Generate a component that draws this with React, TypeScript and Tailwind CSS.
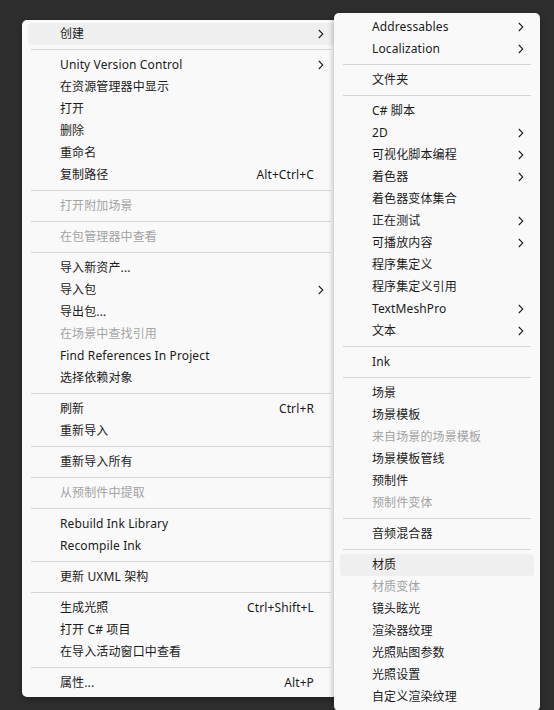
type Item =
  | "sep"
  | { t: string; k?: string; sub?: boolean; dis?: boolean; hl?: boolean };

const leftItems: Item[] = [
  { t: "创建", sub: true, hl: true },
  "sep",
  { t: "Unity Version Control", sub: true },
  { t: "在资源管理器中显示" },
  { t: "打开" },
  { t: "删除" },
  { t: "重命名" },
  { t: "复制路径", k: "Alt+Ctrl+C" },
  "sep",
  { t: "打开附加场景", dis: true },
  "sep",
  { t: "在包管理器中查看", dis: true },
  "sep",
  { t: "导入新资产..." },
  { t: "导入包", sub: true },
  { t: "导出包..." },
  { t: "在场景中查找引用", dis: true },
  { t: "Find References In Project" },
  { t: "选择依赖对象" },
  "sep",
  { t: "刷新", k: "Ctrl+R" },
  { t: "重新导入" },
  "sep",
  { t: "重新导入所有" },
  "sep",
  { t: "从预制件中提取", dis: true },
  "sep",
  { t: "Rebuild Ink Library" },
  { t: "Recompile Ink" },
  "sep",
  { t: "更新 UXML 架构" },
  "sep",
  { t: "生成光照", k: "Ctrl+Shift+L" },
  { t: "打开 C# 项目" },
  { t: "在导入活动窗口中查看" },
  "sep",
  { t: "属性...", k: "Alt+P" },
];

const rightItems: Item[] = [
  { t: "Addressables", sub: true },
  { t: "Localization", sub: true },
  "sep",
  { t: "文件夹" },
  "sep",
  { t: "C# 脚本" },
  { t: "2D", sub: true },
  { t: "可视化脚本编程", sub: true },
  { t: "着色器", sub: true },
  { t: "着色器变体集合" },
  { t: "正在测试", sub: true },
  { t: "可播放内容", sub: true },
  { t: "程序集定义" },
  { t: "程序集定义引用" },
  { t: "TextMeshPro", sub: true },
  { t: "文本", sub: true },
  "sep",
  { t: "Ink" },
  "sep",
  { t: "场景" },
  { t: "场景模板" },
  { t: "来自场景的场景模板", dis: true },
  { t: "场景模板管线" },
  { t: "预制件" },
  { t: "预制件变体", dis: true },
  "sep",
  { t: "音频混合器" },
  "sep",
  { t: "材质", hl: true },
  { t: "材质变体", dis: true },
  { t: "镜头眩光" },
  { t: "渲染器纹理" },
  { t: "光照贴图参数" },
  { t: "光照设置" },
  { t: "自定义渲染纹理" },
];

function Chevron() {
  return (
    <svg width="6" height="10" viewBox="0 0 6 10" className="absolute right-[10px] top-[6px]">
      <path d="M0.8 1 L4.8 5 L0.8 9" fill="none" stroke="#1f1f1f" strokeWidth="1.1" />
    </svg>
  );
}

function MenuList({ items }: { items: Item[] }) {
  return (
    <>
      {items.map((it, i) =>
        it === "sep" ? (
          <div key={i} className="mx-[9px] my-[4px] h-px bg-[#d6d6d6]" />
        ) : (
          <div
            key={i}
            className={`relative mx-[6px] flex h-[22px] items-center rounded-[4px] pl-[32px] pr-[20px] ${
              it.hl ? "bg-[#efefef]" : ""
            } ${it.dis ? "text-[#a3a3a3]" : "text-[#1b1b1b]"}`}
          >
            <span className="flex-1 whitespace-nowrap">{it.t}</span>
            {it.k && <span className="whitespace-nowrap">{it.k}</span>}
            {it.sub && <Chevron />}
          </div>
        )
      )}
    </>
  );
}

export default function App() {
  return (
    <div
      className="relative h-[710px] w-[554px] overflow-hidden bg-[#2e2e2e] text-[12px] leading-[22px] tracking-[0.12px]"
      style={{ fontFamily: '"Noto Sans", "Noto Sans CJK SC", sans-serif' }}
    >
      {/* main context menu */}
      <div className="absolute left-[22px] top-[20px] w-[318px] rounded-[5px] bg-[#f9f9f9] pt-[3px] pb-[3px] shadow-[0_2px_6px_rgba(0,0,0,0.35)]">
        <MenuList items={leftItems} />
      </div>

      {/* create submenu */}
      <div className="absolute left-[334px] top-[13px] w-[206px] rounded-[5px] bg-[#f9f9f9] pt-[3px] pb-[3px] shadow-[0_2px_6px_rgba(0,0,0,0.35)]">
        <MenuList items={rightItems} />
      </div>
    </div>
  );
}
